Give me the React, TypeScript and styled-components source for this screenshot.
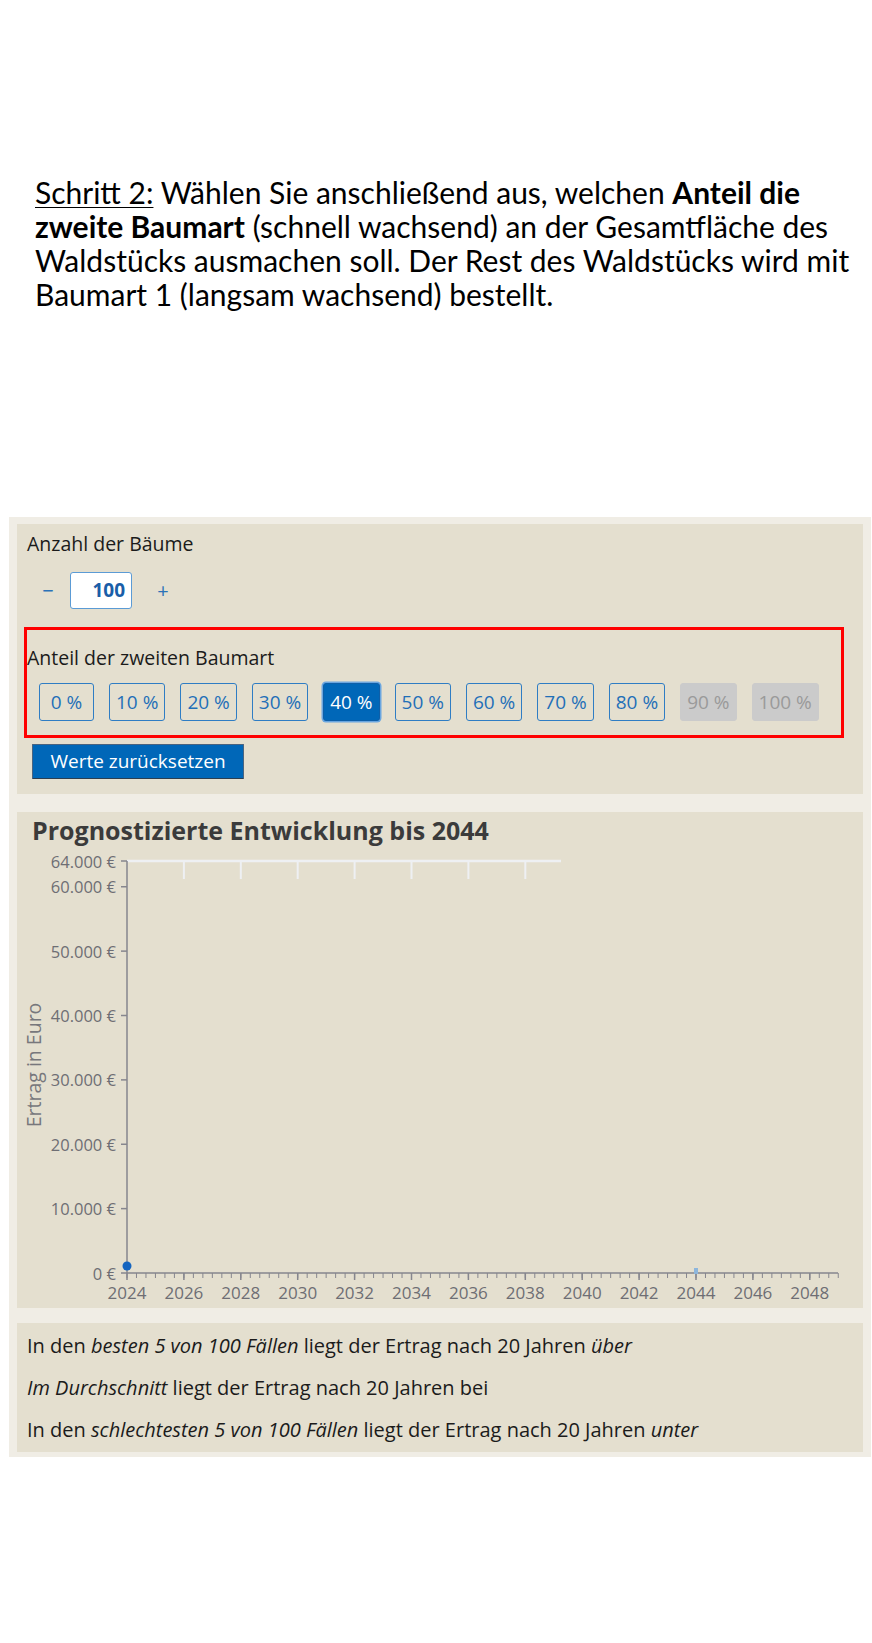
import React from 'react';
import styled, { createGlobalStyle } from 'styled-components';

const GlobalStyle = createGlobalStyle`
  html, body {
    margin: 0;
    padding: 0;
    background: #fff;
  }
  body {
    font-family: "Open Sans", "Noto Sans", sans-serif;
    color: #1b1b1b;
  }
`;

const Page = styled.div`
  width: 872px;
  padding-top: 175px;
  padding-bottom: 186px;
`;

const Intro = styled.p`
  margin: 0 0 0 35px;
  font-family: Lato, "Liberation Sans", sans-serif;
  font-size: 30px;
  line-height: 34px;
  color: #000;
  white-space: nowrap;
`;

const Step = styled.span`
  text-decoration: underline;
  text-underline-offset: 3px;
  text-decoration-thickness: 1px;
`;

const Frame = styled.div`
  margin: 206px 0 0 9px;
  width: 862px;
  box-sizing: border-box;
  padding: 7px 8px 5px 8px;
  background: #f0ede5;
  display: flex;
  flex-direction: column;
`;

const Panel = styled.section`
  background: #e4dfcf;
  box-sizing: border-box;
`;

const ControlsPanel = styled(Panel)`
  display: flex;
  flex-direction: column;
  align-items: flex-start;
  padding: 8px 0 15px 10px;
`;

const Label = styled.div`
  font-size: 19.5px;
  line-height: 24px;
  color: #1b1b1b;
`;

const Stepper = styled.div`
  display: flex;
  align-items: center;
  margin-top: 16px;
  height: 37px;
`;

const StepButton = styled.button<{ $ml: number }>`
  width: 32px;
  height: 37px;
  margin-left: ${p => p.$ml}px;
  padding: 0;
  border: none;
  background: transparent;
  color: #2a72b8;
  font-family: inherit;
  font-size: 20px;
  line-height: 1;
  cursor: pointer;
`;

const CountInput = styled.div`
  width: 62px;
  height: 37px;
  margin-left: 6px;
  box-sizing: border-box;
  border: 1.5px solid #5b9bd5;
  border-radius: 3px;
  background: #fff;
  color: #1a5ea8;
  font-size: 19px;
  font-weight: 700;
  line-height: 34px;
  text-align: right;
  padding-right: 6px;
`;

const Highlight = styled.div`
  width: 820px;
  margin: 18px 0 0 -3px;
  box-sizing: border-box;
  border: 3px solid #ff0000;
  padding: 16px 0 14px 0;
`;

const ShareRow = styled.div`
  display: flex;
  gap: 15px;
  margin-top: 13px;
  padding-left: 12px;
`;

const ShareButton = styled.button<{ $active?: boolean }>`
  min-width: 55px;
  height: 38px;
  padding: 0 6px;
  box-sizing: border-box;
  border-radius: 3px;
  font-family: inherit;
  font-size: 19px;
  line-height: 1;
  cursor: pointer;
  border: 1.5px solid ${p => (p.$active ? '#0f5fa8' : '#2f7dc4')};
  background: ${p => (p.$active ? '#0067b8' : 'transparent')};
  color: ${p => (p.$active ? '#fff' : '#1f6fb8')};
  box-shadow: ${p => (p.$active ? '0 0 0 1.5px #6aa6e0' : 'none')};

  &:disabled {
    border-color: #cbcbcb;
    background: #cbcbcb;
    color: #9a9a9a;
    cursor: default;
  }
`;

const ResetButton = styled.button`
  margin: 6px 0 0 5px;
  width: 212px;
  height: 35px;
  box-sizing: border-box;
  border: 1px solid #4a6480;
  border-bottom-color: #2c3e50;
  border-radius: 1px;
  background: #0067b8;
  color: #fff;
  font-family: inherit;
  font-size: 19px;
  line-height: 1;
  cursor: pointer;
`;

const ChartPanel = styled(Panel)`
  margin-top: 18px;
  height: 496px;
  display: flex;
  flex-direction: column;
`;

const ChartTitle = styled.h2`
  margin: 0;
  padding: 0 0 0 15px;
  height: 33px;
  font-size: 25px;
  line-height: 36px;
  font-weight: 700;
  color: #3b3b3b;
`;

const ChartSvg = styled.svg`
  display: block;
`;

const SummaryPanel = styled(Panel)`
  margin-top: 15px;
  padding: 11px 10px 10px;
  display: flex;
  flex-direction: column;
  gap: 18px;
`;

const SummaryLine = styled.p`
  margin: 0;
  font-size: 20px;
  line-height: 24px;
  color: #1b1b1b;
`;

const shares = [0, 10, 20, 30, 40, 50, 60, 70, 80, 90, 100];
const yTicks = [64000, 60000, 50000, 40000, 30000, 20000, 10000, 0];

const X0 = 110;
const YEAR = 28.45;
const Y_BOTTOM = 428;
const Y_TOP = 16;
const AXIS = '#86868e';
const TICK_TEXT = '#6e6e74';
const xScale = (yr: number) => X0 + (yr - 2024) * YEAR;
const yScale = (v: number) => Y_BOTTOM - (v * (Y_BOTTOM - Y_TOP)) / 64000;
const fmt = (v: number) => (v === 0 ? '0 €' : `${(v / 1000).toFixed(0)}.000 €`);

const Chart: React.FC = () => {
  const minor: number[] = [];
  for (let i = 0; i <= 75; i++) minor.push(2024 + i / 3);
  const major: number[] = [];
  for (let y = 2024; y <= 2048; y += 2) major.push(y);
  const grid = [2026, 2028, 2030, 2032, 2034, 2036, 2038];

  return (
    <ChartSvg width={846} height={463} viewBox="0 0 846 463">
      <line x1={X0} y1={Y_TOP} x2={544} y2={Y_TOP} stroke="#eef0f3" strokeWidth={2.5} />
      {grid.map(g => (
        <line key={g} x1={xScale(g)} y1={Y_TOP} x2={xScale(g)} y2={34} stroke="#eef0f3" strokeWidth={2} />
      ))}

      <line x1={X0} y1={Y_TOP} x2={X0} y2={Y_BOTTOM} stroke={AXIS} strokeWidth={1.5} />
      {yTicks.map(v => (
        <g key={v}>
          <line x1={X0 - 6} y1={yScale(v)} x2={X0} y2={yScale(v)} stroke={AXIS} strokeWidth={1.5} />
          <text
            x={X0 - 11}
            y={yScale(v)}
            textAnchor="end"
            dominantBaseline="central"
            fontSize={16.5}
            fill={TICK_TEXT}
            fontFamily="'Open Sans', sans-serif"
          >
            {fmt(v)}
          </text>
        </g>
      ))}

      <line x1={X0} y1={Y_BOTTOM} x2={821} y2={Y_BOTTOM} stroke={AXIS} strokeWidth={1.5} />
      {minor.map(m => (
        <line key={m} x1={xScale(m)} y1={Y_BOTTOM} x2={xScale(m)} y2={Y_BOTTOM + 5} stroke={AXIS} strokeWidth={1} />
      ))}
      {major.map(y => (
        <g key={y}>
          <line x1={xScale(y)} y1={Y_BOTTOM} x2={xScale(y)} y2={Y_BOTTOM + 7} stroke={AXIS} strokeWidth={1.5} />
          <text
            x={xScale(y)}
            y={447}
            textAnchor="middle"
            dominantBaseline="central"
            fontSize={17}
            fill={TICK_TEXT}
            fontFamily="'Open Sans', sans-serif"
          >
            {y}
          </text>
        </g>
      ))}

      <text
        transform="translate(16 220) rotate(-90)"
        textAnchor="middle"
        dominantBaseline="central"
        fontSize={19.5}
        fill="#77777c"
        fontFamily="'Open Sans', sans-serif"
      >
        Ertrag in Euro
      </text>

      <circle cx={X0} cy={421} r={4.5} fill="#1565c0" />
      <rect x={xScale(2044) - 2} y={423} width={4} height={6} fill="#8db6dc" />
    </ChartSvg>
  );
};

export default function App() {
  return (
    <Page>
      <GlobalStyle />
      <Intro>
        <Step>Schritt 2:</Step> Wählen Sie anschließend aus, welchen <b>Anteil die</b>
        <br />
        <b>zweite Baumart</b> (schnell wachsend) an der Gesamtfläche des
        <br />
        Waldstücks ausmachen soll. Der Rest des Waldstücks wird mit
        <br />
        Baumart 1 (langsam wachsend) bestellt.
      </Intro>

      <Frame>
        <ControlsPanel>
          <Label>Anzahl der Bäume</Label>
          <Stepper>
            <StepButton $ml={5}>−</StepButton>
            <CountInput>100</CountInput>
            <StepButton $ml={15}>+</StepButton>
          </Stepper>
          <Highlight>
            <Label>Anteil der zweiten Baumart</Label>
            <ShareRow>
              {shares.map(s => (
                <ShareButton key={s} $active={s === 40} disabled={s >= 90}>
                  {s} %
                </ShareButton>
              ))}
            </ShareRow>
          </Highlight>
          <ResetButton>Werte zurücksetzen</ResetButton>
        </ControlsPanel>

        <ChartPanel>
          <ChartTitle>Prognostizierte Entwicklung bis 2044</ChartTitle>
          <Chart />
        </ChartPanel>

        <SummaryPanel>
          <SummaryLine>
            In den <i>besten 5 von 100 Fällen</i> liegt der Ertrag nach 20 Jahren <i>über</i>
          </SummaryLine>
          <SummaryLine>
            <i>Im Durchschnitt</i> liegt der Ertrag nach 20 Jahren bei
          </SummaryLine>
          <SummaryLine>
            In den <i>schlechtesten 5 von 100 Fällen</i> liegt der Ertrag nach 20 Jahren <i>unter</i>
          </SummaryLine>
        </SummaryPanel>
      </Frame>
    </Page>
  );
}
